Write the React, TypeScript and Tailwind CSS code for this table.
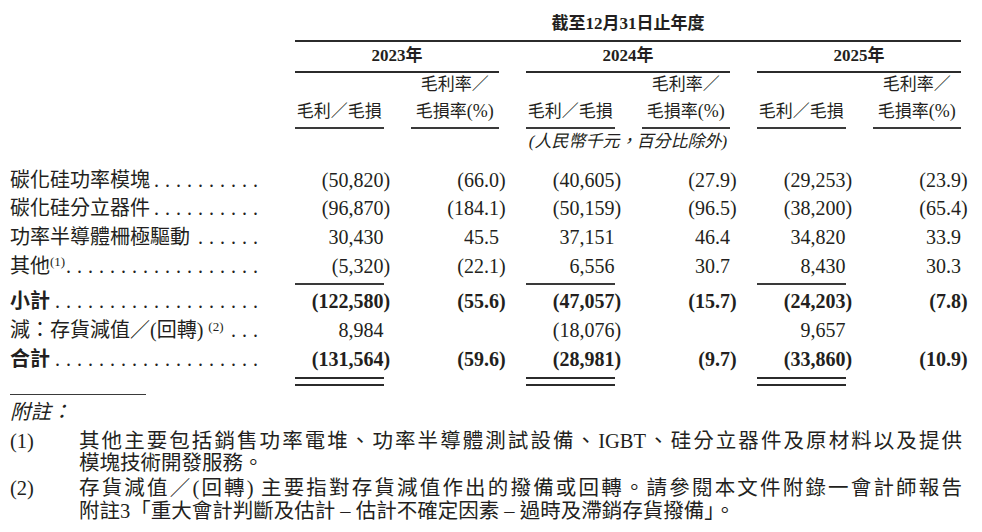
import { Fragment, type ReactNode } from "react";

const GRID = "grid grid-cols-[258px_repeat(6,88.5px)] gap-x-[27px]";

type Row = { label: ReactNode; vals: string[]; dots: number; bold?: boolean };

const items: Row[] = [
  { label: "碳化硅功率模塊", dots: 10, vals: ["(50,820)", "(66.0)", "(40,605)", "(27.9)", "(29,253)", "(23.9)"] },
  { label: "碳化硅分立器件", dots: 10, vals: ["(96,870)", "(184.1)", "(50,159)", "(96.5)", "(38,200)", "(65.4)"] },
  { label: "功率半導體柵極驅動", dots: 6, vals: ["30,430", "45.5", "37,151", "46.4", "34,820", "33.9"] },
  {
    label: (
      <>
        其他<sup className="text-[13px]">(1)</sup>
      </>
    ),
    dots: 18,
    vals: ["(5,320)", "(22.1)", "6,556", "30.7", "8,430", "30.3"],
  },
];

const totals: Row[] = [
  { label: "小計", bold: true, dots: 19, vals: ["(122,580)", "(55.6)", "(47,057)", "(15.7)", "(24,203)", "(7.8)"] },
  {
    label: (
      <>
        減：存貨減值／(回轉) <sup className="text-[13px]">(2)</sup>
      </>
    ),
    dots: 3,
    vals: ["8,984", "", "(18,076)", "", "9,657", ""],
  },
  { label: "合計", bold: true, dots: 19, vals: ["(131,564)", "(59.6)", "(28,981)", "(9.7)", "(33,860)", "(10.9)"] },
];

function Label({ children, dots, bold }: { children: ReactNode; dots: number; bold?: boolean }) {
  return (
    <div className="flex text-[20px] leading-[28.7px]">
      <span className={`whitespace-nowrap ${bold ? "font-bold" : ""}`}>{children}</span>
      <span className="ml-auto mr-[4px] whitespace-nowrap tracking-[6px]">{".".repeat(dots)}</span>
    </div>
  );
}

function Val({ v, bold }: { v: string; bold?: boolean }) {
  if (!v) return <div />;
  const neg = v.startsWith("(");
  return (
    <div className={`whitespace-nowrap text-right text-[20px] leading-[28.7px] ${bold ? "font-bold" : ""}`}>
      {neg ? v.slice(0, -1) : v}
      {neg && <span className="inline-block w-0">)</span>}
    </div>
  );
}

function DataRow({ row }: { row: Row }) {
  return (
    <div className={`${GRID} h-[28.7px]`}>
      <Label dots={row.dots} bold={row.bold}>
        {row.label}
      </Label>
      {row.vals.map((v, i) => (
        <Val key={i} v={v} bold={row.bold} />
      ))}
    </div>
  );
}

export default function App() {
  return (
    <div className="h-[532px] w-[982px] overflow-hidden bg-white pl-[10px] font-['Liberation_Serif','Noto_Sans_CJK_TC',serif] text-[#231f20]">
      {/* column heads */}
      <div className={GRID}>
        <div className="col-span-6 col-start-2 h-[42px] border-b-2 border-[#2b2b2b] pt-[12px] text-center text-[17px] font-bold leading-[24px]">
          截至12月31日止年度
        </div>
      </div>
      <div className={GRID}>
        <div />
        {["2023年", "2024年", "2025年"].map((y) => (
          <div
            key={y}
            className="col-span-2 h-[31px] border-b-2 border-[#2b2b2b] text-center text-[17px] font-bold leading-[28px]"
          >
            {y}
          </div>
        ))}
      </div>
      <div className={GRID}>
        <div />
        {[0, 1, 2].map((i) => (
          <Fragment key={i}>
            <div className="flex h-[56px] flex-col justify-end border-b-2 border-[#3a3a3a] pb-[2px] text-center text-[17px] leading-[26px]">
              <div>毛利／毛損</div>
            </div>
            <div className="flex h-[56px] flex-col justify-end border-b-2 border-[#3a3a3a] pb-[2px] text-center text-[17px] leading-[26px]">
              <div>
                毛利率／
                <br />
                毛損率<span className="text-[18px]">(%)</span>
              </div>
            </div>
          </Fragment>
        ))}
      </div>
      <div className={GRID}>
        <div className="col-span-2 col-start-4 h-[26px] whitespace-nowrap text-center text-[17px] italic leading-[26px]">
          (人民幣千元，百分比除外)
        </div>
      </div>

      {/* body */}
      <div className="mt-[10.6px]">
        {items.map((r, i) => (
          <DataRow key={i} row={r} />
        ))}
      </div>
      <div className={`${GRID} h-[7px]`}>
        <div />
        <div className="mt-[3px] h-[2px] bg-[#3a3a3a]" />
        <div />
        <div className="mt-[3px] h-[2px] bg-[#3a3a3a]" />
        <div />
        <div className="mt-[3px] h-[2px] bg-[#3a3a3a]" />
        <div />
      </div>
      {totals.map((r, i) => (
        <DataRow key={i} row={r} />
      ))}
      <div className={GRID}>
        <div />
        <div className="mt-[3.5px] h-[9px] border-y-2 border-[#2b2b2b]" />
        <div />
        <div className="mt-[3.5px] h-[9px] border-y-2 border-[#2b2b2b]" />
        <div />
        <div className="mt-[3.5px] h-[9px] border-y-2 border-[#2b2b2b]" />
        <div />
      </div>

      {/* notes */}
      <div className="mt-[8px] w-[136px] border-t border-[#3a3a3a]" />
      <div className="mr-[20px] text-[20.5px] leading-[22.5px]">
        <div className="mt-[6.5px] italic">附註：</div>
        <div className="mt-[6px] flex">
          <div className="w-[69px] shrink-0">(1)</div>
          <div className="flex-1">
            <div className="text-justify [text-align-last:justify]">
              其他主要包括銷售功率電堆、功率半導體測試設備、IGBT、硅分立器件及原材料以及提供
            </div>
            <div>模塊技術開發服務。</div>
          </div>
        </div>
        <div className="mt-[2.5px] flex">
          <div className="w-[69px] shrink-0">(2)</div>
          <div className="flex-1">
            <div className="text-justify [text-align-last:justify]">
              存貨減值／(回轉) 主要指對存貨減值作出的撥備或回轉。請參閱本文件附錄一會計師報告
            </div>
            <div>附註3「重大會計判斷及估計 – 估計不確定因素 – 過時及滯銷存貨撥備」。</div>
          </div>
        </div>
      </div>
    </div>
  );
}
